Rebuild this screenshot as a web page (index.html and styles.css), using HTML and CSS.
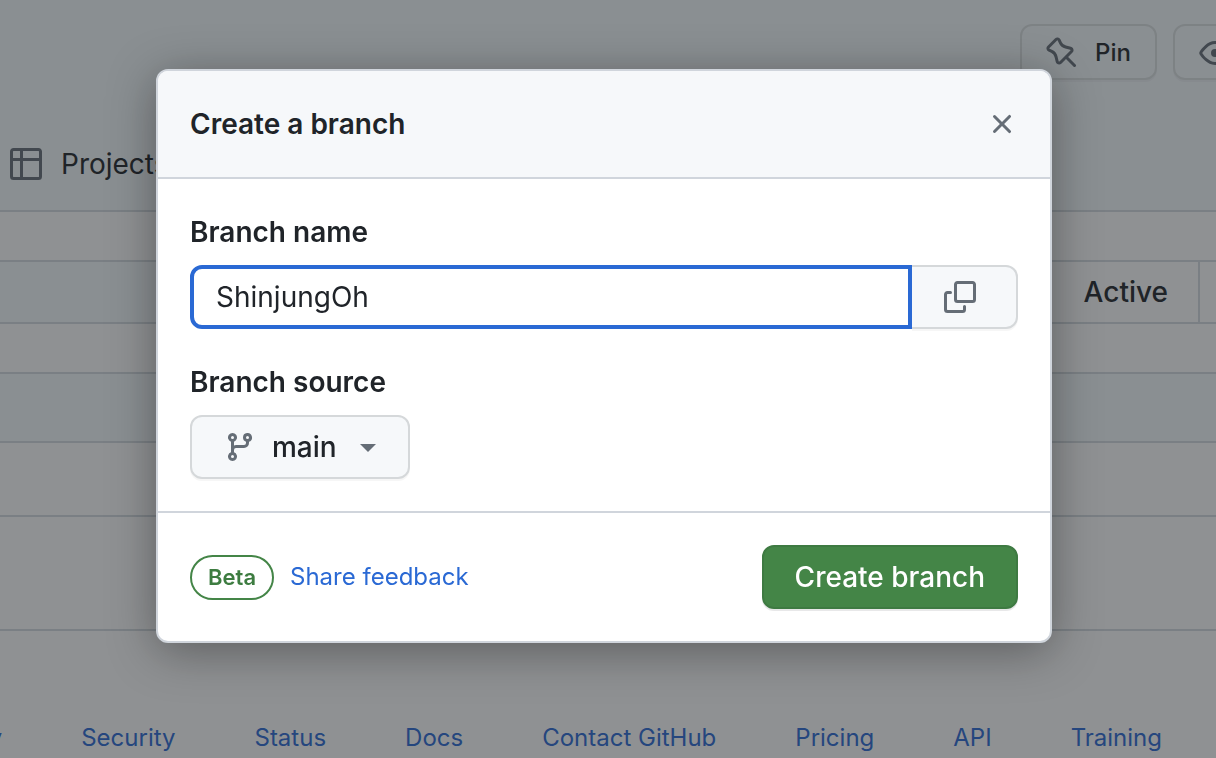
FILE: index.html
```html
<!DOCTYPE html>
<html lang="en">
<head>
<meta charset="utf-8">
<title>Create a branch</title>
<meta name="viewport" content="width=device-width, initial-scale=1">
<link rel="stylesheet" href="styles.css">
</head>
<body>
<div class="page">
  <header class="repo-head">
    <div class="actions">
      <button class="action" type="button"><svg class="icon" viewBox="0 0 16 16" aria-hidden="true"><path d="M4.456.734a1.75 1.75 0 012.826.504l.613 1.327a3.081 3.081 0 002.084 1.707l2.454.584c1.332.317 1.8 1.972.832 2.94L11.06 10l3.72 3.72a.75.75 0 11-1.061 1.06L10 11.06l-2.204 2.205c-.968.968-2.623.5-2.94-.832l-.584-2.454a3.081 3.081 0 00-1.707-2.084l-1.327-.613a1.75 1.75 0 01-.504-2.826L4.456.734zM5.92 1.866a.25.25 0 00-.404-.072L1.794 5.516a.25.25 0 00.072.404l1.328.613A4.582 4.582 0 015.73 9.63l.584 2.454a.25.25 0 00.42.12l5.47-5.47a.25.25 0 00-.12-.42L9.63 5.73a4.581 4.581 0 01-3.098-2.537L5.92 1.866z"/></svg>Pin</button>
      <button class="action" type="button" aria-label="Watch"><svg class="icon" viewBox="0 0 16 16" aria-hidden="true"><path d="M1.679 7.932c.412-.621 1.242-1.75 2.366-2.717C5.175 4.242 6.527 3.5 8 3.5c1.473 0 2.824.742 3.955 1.715 1.124.967 1.954 2.096 2.366 2.717a.119.119 0 010 .136c-.412.621-1.242 1.75-2.366 2.717C10.825 11.758 9.473 12.5 8 12.5c-1.473 0-2.824-.742-3.955-1.715C2.92 9.818 2.09 8.69 1.679 8.068a.119.119 0 010-.136zM8 2c-1.981 0-3.67.992-4.933 2.078C1.797 5.169.88 6.423.43 7.1a1.619 1.619 0 000 1.798c.45.678 1.367 1.932 2.637 3.024C4.329 13.008 6.019 14 8 14c1.981 0 3.67-.992 4.933-2.078 1.27-1.091 2.187-2.345 2.637-3.023a1.619 1.619 0 000-1.798c-.45-.678-1.367-1.932-2.637-3.023C11.671 2.992 9.981 2 8 2zm0 8a2 2 0 100-4 2 2 0 000 4z"/></svg></button>
    </div>
    <nav class="tabs">
      <a class="tab" href="#projects"><svg class="icon" viewBox="0 0 16 16" aria-hidden="true"><path fill-rule="evenodd" d="M0 1.75C0 .784.784 0 1.75 0h12.5C15.216 0 16 .784 16 1.75v12.5A1.75 1.75 0 0 1 14.25 16H1.75A1.75 1.75 0 0 1 0 14.25ZM6.5 6.5v8h7.75a.25.25 0 0 0 .25-.25V6.5Zm8-1.5V1.75a.25.25 0 0 0-.25-.25H6.5V5Zm-13 1.5v7.75c0 .138.112.25.25.25H5v-8ZM5 5V1.5H1.75a.25.25 0 0 0-.25.25V5Z"/></svg>Projects</a>
    </nav>
  </header>
  <main>
    <div class="spacer"></div>
    <div class="filters"><button class="filter" type="button">Active</button></div>
    <div class="spacer"></div>
    <div class="list-head"></div>
    <div class="list-row"></div>
    <div class="list-end"></div>
  </main>
  <footer class="links">
    <a href="#privacy">Privacy</a>
    <a href="#security">Security</a>
    <a href="#status">Status</a>
    <a href="#docs">Docs</a>
    <a href="#contact">Contact GitHub</a>
    <a href="#pricing">Pricing</a>
    <a href="#api">API</a>
    <a href="#training">Training</a>
  </footer>
</div>

<div class="backdrop">
  <form class="dialog" role="dialog" aria-labelledby="dialog-title">
    <div class="dialog-head">
      <h1 class="title" id="dialog-title">Create a branch</h1>
      <button class="close" type="button" aria-label="Close"><svg class="icon" viewBox="0 0 16 16" aria-hidden="true"><path d="M3.72 3.72a.75.75 0 011.06 0L8 6.94l3.22-3.22a.75.75 0 111.06 1.06L9.06 8l3.22 3.22a.75.75 0 11-1.06 1.06L8 9.06l-3.22 3.22a.75.75 0 01-1.06-1.06L6.94 8 3.72 4.78a.75.75 0 010-1.06z"/></svg></button>
    </div>
    <div class="dialog-body">
      <div class="field">
        <label class="label" for="branch-name">Branch name</label>
        <div class="input-group">
          <input class="input" id="branch-name" type="text" value="ShinjungOh">
          <button class="copy" type="button" aria-label="Copy branch name"><svg class="icon" viewBox="0 0 16 16" aria-hidden="true"><path d="M0 6.75C0 5.784.784 5 1.75 5h1.5a.75.75 0 010 1.5h-1.5a.25.25 0 00-.25.25v7.5c0 .138.112.25.25.25h7.5a.25.25 0 00.25-.25v-1.5a.75.75 0 011.5 0v1.5A1.75 1.75 0 019.25 16h-7.5A1.75 1.75 0 010 14.25v-7.5z"/><path fill-rule="evenodd" d="M5 1.75C5 .784 5.784 0 6.75 0h7.5C15.216 0 16 .784 16 1.75v7.5A1.75 1.75 0 0114.25 11h-7.5A1.75 1.75 0 015 9.25v-7.5zm1.75-.25a.25.25 0 00-.25.25v7.5c0 .138.112.25.25.25h7.5a.25.25 0 00.25-.25v-7.5a.25.25 0 00-.25-.25h-7.5z"/></svg></button>
        </div>
      </div>
      <div class="field">
        <label class="label" for="branch-source">Branch source</label>
        <div class="source">
          <svg class="icon" viewBox="0 0 16 16" aria-hidden="true"><path fill-rule="evenodd" d="M11.75 2.5a.75.75 0 100 1.5.75.75 0 000-1.5zm-2.25.75a2.25 2.25 0 113 2.122V6A2.5 2.5 0 0110 8.5H6a1 1 0 00-1 1v1.128a2.251 2.251 0 11-1.5 0V5.372a2.25 2.25 0 111.5 0v1.836A2.492 2.492 0 016 7h4a1 1 0 001-1v-.628A2.25 2.25 0 019.5 3.25zM4.25 12a.75.75 0 100 1.5.75.75 0 000-1.5zM3.5 3.25a.75.75 0 111.5 0 .75.75 0 01-1.5 0z"/></svg>
          <select class="select" id="branch-source"><option>main</option></select>
          <span class="caret"></span>
        </div>
      </div>
    </div>
    <div class="dialog-foot">
      <span class="beta">Beta</span>
      <a class="feedback" href="#feedback">Share feedback</a>
      <button class="create" type="button">Create branch</button>
    </div>
  </form>
</div>
</body>
</html>
```

FILE: styles.css
```css
* { box-sizing: border-box; }

body {
  margin: 0;
  background: #fff;
  color: #202429;
  font: 400 28px/42px Inter, "Liberation Sans", sans-serif;
}

a { color: #2a69d4; text-decoration: none; }
button, input, select { font: inherit; color: inherit; margin: 0; }

.icon {
  display: block;
  flex: none;
  width: 32px;
  height: 32px;
  fill: #656d76;
}

/* Repository page */
.page { height: 100vh; overflow: hidden; }

.repo-head {
  padding-top: 24px;
  background: #f5fafd;
  border-bottom: 2px solid #d4dbe0;
}

.actions {
  display: flex;
  justify-content: flex-end;
  gap: 16px;
  margin-right: -41px;
}

.action {
  display: flex;
  align-items: center;
  gap: 17px;
  height: 56px;
  padding: 2px 24px 0;
  border: 2px solid #dbe0e1;
  border-radius: 12px;
  background: #f5fafd;
  box-shadow: 0 2px 0 rgba(27, 31, 36, 0.04);
  font-size: 24px;
  font-weight: 500;
}

.tabs {
  display: flex;
  padding: 38px 10px 0;
}

.tab {
  display: flex;
  align-items: center;
  gap: 19px;
  height: 92px;
  color: #202429;
}

.spacer { height: 48px; }

.filters {
  display: flex;
  justify-content: flex-end;
  height: 64px;
  border: 2px solid #d4dbe0;
  border-width: 2px 0;
  background: linear-gradient(90deg, #f5fafd 50%, #fff 50%);
}

.filter {
  margin-right: 16px;
  padding: 0 30px 0 32px;
  border: 2px solid #d4dbe0;
  border-width: 0 2px;
  background: #fff;
  font-weight: 500;
}

.list-head {
  height: 71px;
  border: 2px solid #d4dbe0;
  border-width: 2px 0;
  background: #f5fafd;
}

.list-row { height: 74px; border-bottom: 2px solid #d4dbe0; }
.list-end { height: 114px; border-bottom: 2px solid #d4dbe0; }

.links {
  display: flex;
  justify-content: flex-end;
  gap: 79px;
  padding: 86px 54px 0 0;
  font-size: 24px;
  white-space: nowrap;
}

/* Modal */
.backdrop {
  position: fixed;
  inset: 0;
  padding: 69px 164px 0 156px;
  background: rgba(31, 35, 39, 0.5);
}

.dialog {
  overflow: hidden;
  border: 2px solid #d0d5dc;
  border-radius: 12px;
  background: #fff;
  box-shadow: 0 8px 48px rgba(0, 0, 0, 0.36);
}

.dialog-head {
  display: flex;
  align-items: center;
  justify-content: space-between;
  padding: 32px;
  border-bottom: 2px solid #d0d5dc;
  background: #f6f8fa;
}

.title { margin: 0; font-size: 28px; font-weight: 600; }

.close {
  padding: 0;
  border: 0;
  background: none;
}

.dialog-body {
  display: flex;
  flex-direction: column;
  gap: 32px;
  padding: 32px;
}

.field {
  display: flex;
  flex-direction: column;
  align-items: flex-start;
  gap: 12px;
}

.label { font-weight: 600; }

.input-group { display: flex; width: 100%; height: 64px; }

.input {
  flex: 1;
  min-width: 0;
  padding: 0 22px;
  border: 4px solid #2a69d4;
  border-radius: 12px 0 0 12px;
  outline: 0;
  background: #fff;
}

.copy {
  padding: 0 40px 0 32px;
  border: 2px solid #d5d8da;
  border-left: 0;
  border-radius: 0 12px 12px 0;
  background: #f6f8fa;
  box-shadow: 0 2px 0 rgba(27, 31, 36, 0.04);
}

.source {
  display: flex;
  align-items: center;
  gap: 16px;
  height: 64px;
  padding: 0 32px;
  border: 2px solid #d5d8da;
  border-radius: 12px;
  background: #f6f8fa;
  box-shadow: 0 2px 0 rgba(27, 31, 36, 0.04);
}

.select {
  appearance: none;
  padding: 0;
  border: 0;
  background: none;
  font-weight: 500;
}

.caret {
  margin: 2px 0 0 7px;
  border: 8px solid transparent;
  border-top-color: #656d76;
  border-bottom: 0;
}

.dialog-foot {
  display: flex;
  align-items: center;
  gap: 16px;
  padding: 32px;
  border-top: 2px solid #d0d5dc;
}

.beta {
  padding: 0 16px;
  border: 2px solid #448547;
  border-radius: 24px;
  color: #3d7c40;
  font-size: 22px;
  font-weight: 600;
  line-height: 41px;
}

.feedback { font-size: 24px; }

.create {
  height: 64px;
  margin-left: auto;
  padding: 0 31px;
  border: 2px solid #3e7a42;
  border-radius: 12px;
  background: #448547;
  box-shadow: 0 2px 0 rgba(27, 31, 36, 0.1);
  color: #fff;
  font-weight: 500;
}
```
